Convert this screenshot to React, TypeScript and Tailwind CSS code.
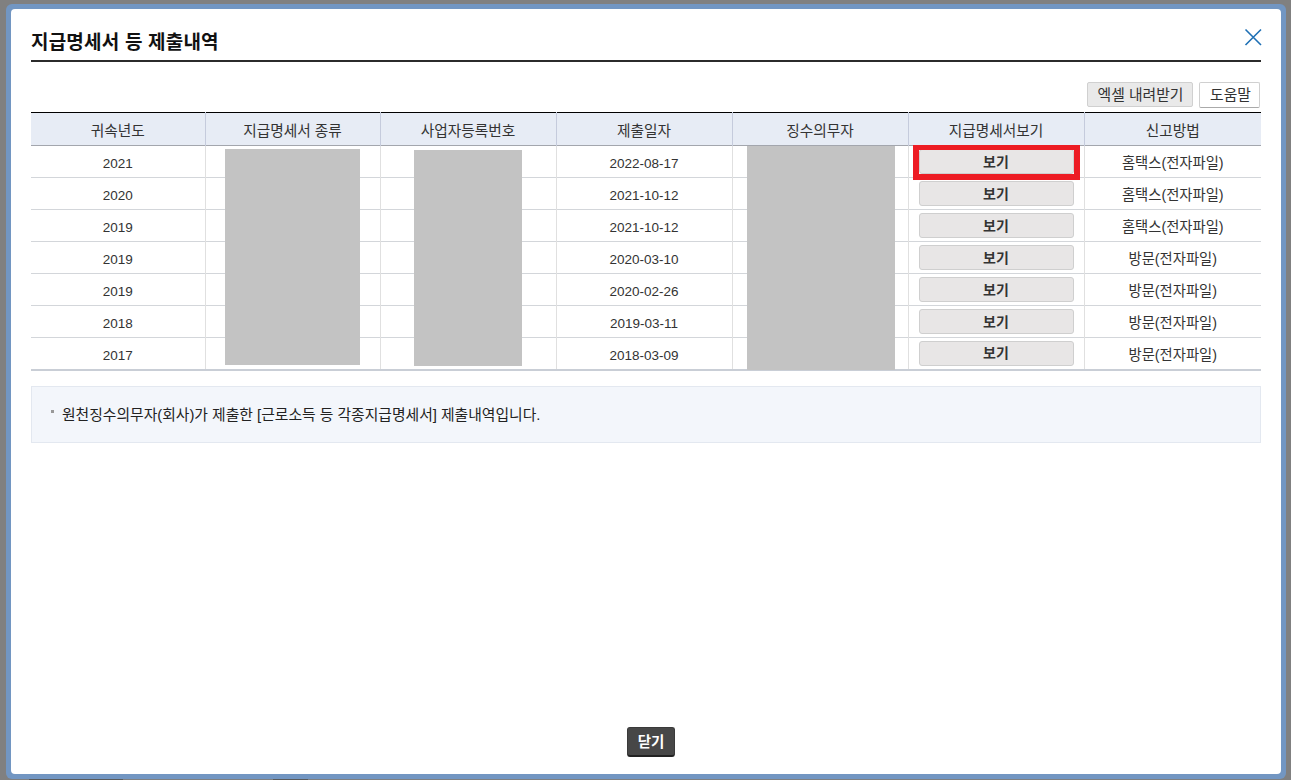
const headers = ["귀속년도", "지급명세서 종류", "사업자등록번호", "제출일자", "징수의무자", "지급명세서보기", "신고방법"];
const rows = [
  ["2021", "2022-08-17", "홈택스(전자파일)"],
  ["2020", "2021-10-12", "홈택스(전자파일)"],
  ["2019", "2021-10-12", "홈택스(전자파일)"],
  ["2019", "2020-03-10", "방문(전자파일)"],
  ["2019", "2020-02-26", "방문(전자파일)"],
  ["2018", "2019-03-11", "방문(전자파일)"],
  ["2017", "2018-03-09", "방문(전자파일)"],
];
const widths = ["w-[174px]", "w-[175px]", "w-[176px]", "w-[176px]", "w-[176px]", "w-[176px]", "w-[177px]"];

export default function App() {
  return (
    <div className="h-[780px] w-[1291px] overflow-hidden bg-[#808080] pt-[4px] pl-[6px] pr-[5px] font-['Liberation_Sans','Noto_Sans_CJK_KR',sans-serif]">
      <div className="h-[775px] rounded-[6px] bg-[#7296c2] p-[5px]">
        <div className="relative flex h-[765px] flex-col rounded-[4px] bg-white px-[20px]">
          <div className="flex h-[53px] items-end border-b-2 border-[#2b2b2b] pb-[5px]">
            <h1 className="text-[19px] leading-[24px] font-bold tracking-[0.2px] text-[#111]">지급명세서 등 제출내역</h1>
          </div>
          <button className="absolute top-[18px] right-[18px] text-[#1f70b5]">
            <svg width="20" height="20" viewBox="0 0 20 20" fill="none" stroke="currentColor" strokeWidth="1.6">
              <path d="M2.5 2.5 18 18M18 2.5 2.5 18" />
            </svg>
          </button>
          <div className="mt-[20px] flex h-[26px] items-start justify-end gap-[6px] pr-[1px]">
            <button className="h-[25px] w-[106px] rounded-[2px] border border-[#d0d0d0] bg-[#e9e9e9] pt-[1px] pl-[1px] text-[14.8px] text-[#333]">엑셀 내려받기</button>
            <button className="h-[26px] w-[61px] rounded-[2px] border border-[#d0d0d0] border-b-[#aaa] bg-white pt-[1px] pl-[2px] text-[14.8px] text-[#333]">도움말</button>
          </div>
          <div className="relative mt-[4px]">
            <table className="w-[1230px] table-fixed border-collapse border-t border-black text-[14.3px] text-[#333]">
              <thead>
                <tr className="h-[33px] border-b border-[#a3a6ad] bg-[#e7ecf5]">
                  {headers.map((h, i) => (
                    <th key={h} className={`${widths[i]} border-l border-[#c5cbdc] p-0 pt-[4px] text-[14.7px] font-normal text-[#333] first:border-l-0`}>{h}</th>
                  ))}
                </tr>
              </thead>
              <tbody>
                {rows.map((r, i) => (
                  <tr key={i} className={`h-[32px] ${i === 6 ? "border-b-2 border-[#c9ced6]" : "border-b border-[#d3d6da]"}`}>
                    <td className="p-0 pt-[5px] text-center text-[13.5px]">{r[0]}</td>
                    <td className="border-l border-[#e0e0e0] p-0" />
                    <td className="border-l border-[#e0e0e0] p-0" />
                    <td className="border-l border-[#e0e0e0] p-0 pt-[5px] text-center text-[13.5px]">{r[1]}</td>
                    <td className="border-l border-[#e0e0e0] p-0" />
                    <td className="border-l border-[#e0e0e0] p-0 text-center">
                      <button className="mx-auto block h-[25px] w-[155px] rounded-[3px] border border-[#cfcfcf] bg-[#e8e6e6] pt-[1px] text-[14px] font-bold text-[#333]">보기</button>
                    </td>
                    <td className="border-l border-[#e0e0e0] p-0 pt-[4px] text-center">{r[2]}</td>
                  </tr>
                ))}
              </tbody>
            </table>
            <div className="absolute top-[37px] left-[194px] h-[216px] w-[135px] bg-[#c3c3c3]" />
            <div className="absolute top-[38px] left-[383px] h-[216px] w-[108px] bg-[#c3c3c3]" />
            <div className="absolute top-[34px] left-[716px] h-[224px] w-[148px] bg-[#c3c3c3]" />
            <div className="absolute top-[33px] left-[882px] h-[35px] w-[167px] border-x-[6px] border-t-[5px] border-b-[6px] border-[#ed1c24]" />
          </div>
          <div className="mt-[15px] flex h-[57px] items-center border border-[#e3e8f0] bg-[#f3f6fb] pl-[19px] text-[14.8px] text-[#222]">
            <span className="mr-[8px] mb-[5px] h-[3px] w-[3px] bg-[#999]" />
            <span className="pt-[2px]">원천징수의무자(회사)가 제출한 [근로소득 등 각종지급명세서] 제출내역입니다.</span>
          </div>
          <div className="flex flex-1 items-end justify-center pb-[17px]">
            <button className="ml-[10px] h-[30px] w-[48px] rounded-[3px] border border-[#3a3a3a] border-b-2 border-b-[#222] bg-[#474747] pt-[2px] text-[14.5px] font-bold text-white">닫기</button>
          </div>
        </div>
      </div>
      <div className="flex h-px">
        <div className="ml-[23px] w-[94px] bg-[#5a5a5a]" />
        <div className="ml-[150px] w-[35px] bg-[#5a5a5a]" />
      </div>
    </div>
  );
}
